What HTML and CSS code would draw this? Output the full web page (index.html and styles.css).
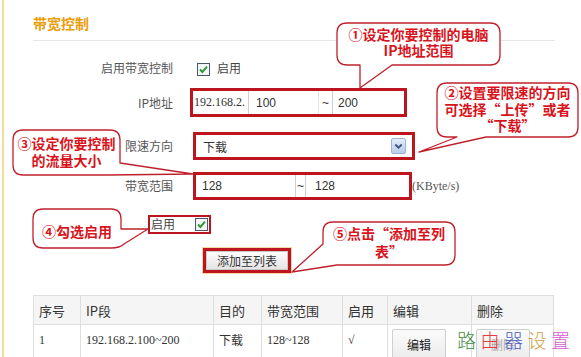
FILE: index.html
```html
<!DOCTYPE html>
<html lang="zh-CN">
<head>
<meta charset="utf-8">
<title>带宽控制</title>
<link rel="stylesheet" href="styles.css">
</head>
<body>
<div class="screen">
  <div class="page">
    <h2 class="title">带宽控制</h2>
    <div class="rule"></div>
    <div class="form">
      <div class="row r1">
        <span class="lbl">启用带宽控制</span>
        <span class="ctl">
          <svg class="cb" width="13" height="13" viewBox="0 0 13 13"><rect x="0.5" y="0.5" width="12" height="12" fill="#f3f5f7" stroke="#4d5866"/><path d="M3 6.5 L5.4 9 L10 3.6" fill="none" stroke="#2f9a36" stroke-width="2"/></svg>
          <span class="cbtext">启用</span>
        </span>
      </div>
      <div class="row r2">
        <span class="lbl">IP地址</span>
        <div class="hl ip">
          <span class="prefix">192.168.2.</span>
          <span class="inp ip1">100</span>
          <span class="inp tilde">~</span>
          <span class="inp ip2">200</span>
        </div>
      </div>
      <div class="row r3">
        <span class="lbl">限速方向</span>
        <div class="hl sel">
          <span class="seltext">下载</span>
          <svg class="arrow" width="15" height="16" viewBox="0 0 15 16"><defs><linearGradient id="ag" x1="0" y1="0" x2="0" y2="1"><stop offset="0" stop-color="#e6eefb"/><stop offset="1" stop-color="#b7cae9"/></linearGradient></defs><rect x="0.5" y="0.5" width="14" height="15" rx="1.5" fill="url(#ag)" stroke="#9fb3d6"/><path d="M4.3 6.5 L7.5 9.6 L10.7 6.5" fill="none" stroke="#3d5688" stroke-width="2"/></svg>
        </div>
      </div>
      <div class="row r4">
        <span class="lbl">带宽范围</span>
        <div class="hl bw">
          <span class="inp bw1">128</span>
          <span class="inp tilde2">~</span>
          <span class="inp bw2">128</span>
        </div>
        <span class="unit">(KByte/s)</span>
      </div>
    </div>
    <div class="enable-row">
      <div class="hl en">
        <span class="entext">启用</span>
        <svg class="cb" width="13" height="13" viewBox="0 0 13 13"><rect x="0.5" y="0.5" width="12" height="12" fill="#f3f5f7" stroke="#4d5866"/><path d="M3 6.5 L5.4 9 L10 3.6" fill="none" stroke="#2f9a36" stroke-width="2"/></svg>
      </div>
    </div>
    <div class="btn-row">
      <div class="hl addwrap"><button class="addbtn">添加至列表</button></div>
    </div>
    <table class="list">
      <colgroup>
        <col class="c1"><col class="c2"><col class="c3"><col class="c4"><col class="c5"><col class="c6"><col class="c7">
      </colgroup>
      <thead>
        <tr><th>序号</th><th>IP段</th><th>目的</th><th>带宽范围</th><th>启用</th><th>编辑</th><th>删除</th></tr>
      </thead>
      <tbody>
        <tr>
          <td class="num">1</td>
          <td class="num">192.168.2.100~200</td>
          <td>下载</td>
          <td class="num">128~128</td>
          <td class="num">√</td>
          <td class="btncell"><button class="tbtn">编辑</button></td>
          <td class="btncell"><button class="tbtn del">删除</button></td>
        </tr>
      </tbody>
    </table>
  </div>

  <svg class="bubbles" width="581" height="357" viewBox="0 0 581 357">
    <g fill="#fff" stroke="#c0202b" stroke-width="1.3" stroke-linejoin="round">
      <path d="M347 23 H490 Q500 23 500 33 V55 Q500 65 490 65 H392 L360 88 L360 65 H347 Q337 65 337 55 V33 Q337 23 347 23 Z"/>
      <path d="M447 83 H568 Q578 83 578 93 V127 Q578 137 568 137 H486 L419 152 L457 137 H447 Q437 137 437 127 V93 Q437 83 447 83 Z"/>
      <path d="M23 130 H110 Q120 130 120 140 V163 L193 174 L108 175 H23 Q13 175 13 165 V140 Q13 130 23 130 Z"/>
      <path d="M43 209 H111 Q121 209 121 219 V229 H148 L124 244 Q120 248 111 248 H43 Q33 248 33 238 V219 Q33 209 43 209 Z"/>
      <path d="M333 222 H445 Q455 222 455 232 V255 Q455 265 445 265 H337 L292 272 L323 244 V232 Q323 222 333 222 Z"/>
    </g>
  </svg>
  <div class="note n1">①设定你要控制的电脑<br>IP地址范围</div>
  <div class="note n2">②设置要限速的方向<br>可选择“上传”或者<br>“下载”</div>
  <div class="note n3">③设定你要控制<br>的流量大小</div>
  <div class="note n4">④勾选启用</div>
  <div class="note n5">⑤点击“添加至列<br>表”</div>

  <div class="watermark"><span class="w1">路</span><span class="w2">由</span><span class="w3">器</span><span class="w4">设</span><span class="w5">置</span></div>
</div>
</body>
</html>
```
FILE: styles.css
```css
* { box-sizing: border-box; }
html, body { margin: 0; padding: 0; background: #fff; }
body {
  font-family: "Noto Sans CJK SC", "Noto Sans", sans-serif;
  font-size: 12px;
  color: #555;
}
.screen { position: relative; width: 581px; height: 357px; overflow: hidden; }
.page {
  margin-left: 2px;
  border-left: 2px solid #f0dd9e;
  padding-left: 29px;
  height: 357px;
}
.title {
  margin: 0;
  padding-top: 14px;
  font-size: 14px;
  line-height: 18px;
  font-weight: bold;
  color: #eb9d0a;
}
.rule { margin-top: 8px; width: 522px; border-top: 1px solid #e6e6e6; }

.form { display: flex; flex-direction: column; }
.row { display: flex; align-items: center; }
.lbl {
  width: 140px; flex: none; text-align: right; margin-right: 17px;
  line-height: 16px; color: #555;
}
.r1 { margin-top: 14px; height: 25px; }
.r2 { margin-top: 8px; height: 29px; }
.r3 { margin-top: 15px; height: 28px; }
.r4 { margin-top: 12px; height: 28px; }

.ctl { display: flex; align-items: center; padding-left: 7px; padding-top: 3px; }
.cb { display: block; flex: none; }
.cbtext { margin-left: 7px; color: #444; font-size: 12px; margin-top: -3px; }

.hl { border: 3px solid #bd151d; display: flex; align-items: stretch; background: #fff; }
.ip { width: 217px; height: 29px; }
.prefix {
  width: 55px; padding-left: 1px; display: flex; align-items: center;
  font-family: "Liberation Serif", serif; font-size: 12px; color: #333;
}
.inp {
  display: flex; align-items: center;
  font-family: "Liberation Sans", Arial, sans-serif; font-size: 12px; color: #333;
}
.ip1 { width: 70px; border-left: 1px solid #cfcfcf; padding-left: 7px; }
.tilde { width: 14px; padding-left: 3px; border-left: 1px solid #e4e4e4; }
.ip2 { flex: 1; border-left: 1px solid #cfcfcf; padding-left: 5px; }

.sel {
  margin-left: 3px; width: 222px; height: 28px;
  justify-content: space-between; align-items: center;
  padding: 0 6px 0 7px;
}
.seltext { color: #333; font-size: 12px; }
.arrow { display: block; }

.bw { margin-left: 3px; width: 219px; height: 28px; }
.bw1 { width: 99px; padding-left: 6px; }
.tilde2 { width: 10px; border-left: 1px solid #cfcfcf; padding-left: 1px; }
.bw2 { flex: 1; border-left: 1px solid #cfcfcf; padding-left: 9px; }
.unit { font-family: "Liberation Serif", serif; font-size: 12px; color: #555; }

.enable-row { margin-top: 15px; height: 19px; padding-left: 115px; display: flex; }
.en {
  width: 63px; height: 19px; border-width: 2px;
  align-items: center; justify-content: space-between; padding: 0 1px 0 1px;
}
.entext { color: #444; font-size: 12px; line-height: 14px; margin-top: -2px; }

.btn-row { margin-top: 14px; height: 25px; padding-left: 170px; display: flex; }
.addwrap { width: 88px; height: 25px; box-shadow: 0 0 0 1px #f6d7a0; }
.addbtn {
  flex: 1; margin: 0; padding: 0;
  border: 1px solid #c9c9c9;
  background: linear-gradient(#fdfdfd, #e4e4e4);
  font-family: "Noto Sans CJK SC", sans-serif; font-size: 12px; color: #333;
}

.list {
  margin-top: 22px;
  width: 520px;
  border-collapse: collapse;
  table-layout: fixed;
}
.c1 { width: 47px; } .c2 { width: 133px; } .c3 { width: 48px; } .c4 { width: 81px; }
.c5 { width: 45px; } .c6 { width: 84px; } .c7 { width: 82px; }
.list th {
  height: 29px; padding: 0 0 0 5px;
  background: #f5f5f5; border: 1px solid #dedede;
  text-align: left; font-weight: normal; font-size: 13px; color: #333;
}
.list td {
  height: 40px; padding: 7px 0 0 5px; vertical-align: top;
  border: 1px solid #dedede; font-size: 12px; line-height: 16px; color: #333;
}
.list td.num { font-family: "Liberation Serif", serif; font-size: 12px; }
.list td.btncell { padding: 4px 0 0 4px; }
.tbtn {
  width: 54px; height: 30px; margin: 0; padding: 0;
  border: 1px solid #cfcfcf; border-radius: 2px;
  background: linear-gradient(#fbfbfb, #ececec);
  font-family: "Noto Sans CJK SC", sans-serif; font-size: 12px; color: #222;
}
.tbtn.del { color: #aaa; }

.bubbles { position: absolute; left: 0; top: 0; pointer-events: none; }
.note {
  position: absolute;
  font-family: "Noto Sans CJK SC", sans-serif;
  font-size: 14px; font-weight: bold; color: #d8141c;
  text-align: center; white-space: nowrap;
}
.n1 { left: 337px; top: 26px; width: 163px; line-height: 16px; }
.n2 { left: 437px; top: 84px; width: 141px; line-height: 16.5px; }
.n3 { left: 13px; top: 135px; width: 107px; line-height: 16.5px; }
.n4 { left: 33px; top: 222px; width: 88px; line-height: 18px; }
.n5 { left: 323px; top: 224px; width: 132px; line-height: 18px; }

.watermark {
  position: absolute; left: 457px; top: 328px;
  font-family: "Noto Sans CJK SC", sans-serif; font-weight: 300;
  font-size: 19px; line-height: 24px; letter-spacing: 4.5px;
}
.w1 { color: #3f8e3f; }
.w2 { color: #e53a40; }
.w3 { color: #4f5fc6; }
.w4 { color: #c9a343; }
.w5 { color: #d95cd1; }
```
